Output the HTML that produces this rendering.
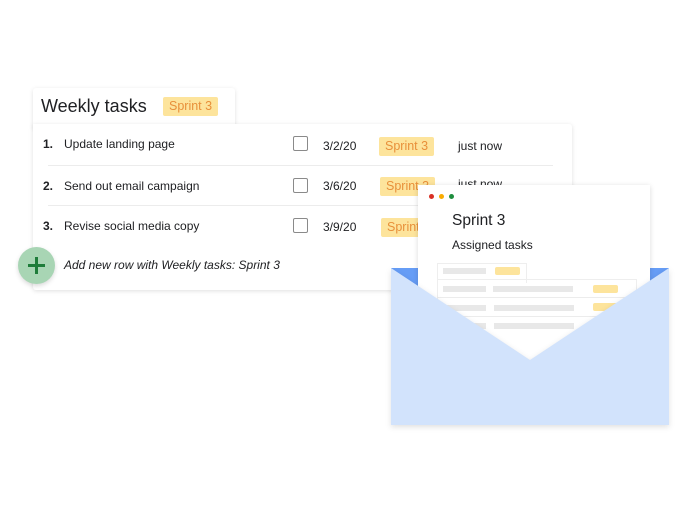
<!DOCTYPE html>
<html><head><style>
*{margin:0;padding:0;box-sizing:border-box}
body{width:700px;height:518px;background:#fff;position:relative;overflow:hidden;font-family:"Liberation Sans",Arial,sans-serif;color:#202124}
.abs{position:absolute}
.tab{left:33px;top:88px;width:202px;height:40px;background:#fff;box-shadow:0 1px 4px rgba(0,0,0,.12);border-radius:3px 3px 0 0}
.card{left:33px;top:124px;width:539px;height:166px;background:#fff;box-shadow:0 1px 5px rgba(0,0,0,.13);border-radius:0 3px 3px 3px}
.chip{background:#fde49c;color:#e8903a;font-size:12.5px;border-radius:2px;padding:2px 6px;line-height:15px}
.t{font-size:12px;color:#202124}
.cb{width:15px;height:15px;border:1.5px solid #8a8a8a;border-radius:2px}
.line{height:1px;background:#ececec}
.g{background:#e8e8e8;height:6px}
.y{background:#fde49c;height:8px;border-radius:2px}
</style></head><body>
<div class="abs tab"></div>
<div class="abs card"></div>
<div class="abs" style="left:41px;top:96px;font-size:18px;color:#202124">Weekly tasks</div>
<div class="abs chip" style="left:163px;top:97px;">Sprint 3</div>

<div class="abs t" style="left:43px;top:137px;font-weight:bold">1.</div>
<div class="abs t" style="left:64px;top:137px">Update landing page</div>
<div class="abs cb" style="left:293px;top:136px"></div>
<div class="abs t" style="left:323px;top:139px">3/2/20</div>
<div class="abs chip" style="left:379px;top:137px">Sprint 3</div>
<div class="abs t" style="left:458px;top:139px">just now</div>
<div class="abs line" style="left:48px;top:165px;width:505px"></div>

<div class="abs t" style="left:43px;top:179px;font-weight:bold">2.</div>
<div class="abs t" style="left:64px;top:179px">Send out email campaign</div>
<div class="abs cb" style="left:293px;top:178px"></div>
<div class="abs t" style="left:323px;top:179px">3/6/20</div>
<div class="abs chip" style="left:380px;top:177px">Sprint 3</div>
<div class="abs t" style="left:458px;top:177px">just now</div>
<div class="abs line" style="left:48px;top:205px;width:505px"></div>

<div class="abs t" style="left:43px;top:219px;font-weight:bold">3.</div>
<div class="abs t" style="left:64px;top:219px">Revise social media copy</div>
<div class="abs cb" style="left:293px;top:218px"></div>
<div class="abs t" style="left:323px;top:220px">3/9/20</div>
<div class="abs chip" style="left:381px;top:218px">Sprint 3</div>

<div class="abs" style="left:18px;top:247px;width:37px;height:37px;border-radius:50%;background:#a8d5b4;box-shadow:0 2px 5px rgba(0,0,0,.15)"></div>
<div class="abs" style="left:28px;top:264px;width:17px;height:3px;background:#1e7d3a"></div>
<div class="abs" style="left:35px;top:257px;width:3px;height:17px;background:#1e7d3a"></div>
<div class="abs t" style="left:64px;top:258px;font-style:italic">Add new row with Weekly tasks: Sprint 3</div>

<div class="abs" style="left:391px;top:268px;width:278px;height:100px;background:#669df6"></div>
<div class="abs" style="left:418px;top:185px;width:232px;height:200px;background:#fff;box-shadow:0 1px 5px rgba(0,0,0,.15)"></div>
<div class="abs" style="left:429px;top:194px;width:5px;height:5px;border-radius:50%;background:#d93025"></div>
<div class="abs" style="left:439px;top:194px;width:5px;height:5px;border-radius:50%;background:#f9ab00"></div>
<div class="abs" style="left:449px;top:194px;width:5px;height:5px;border-radius:50%;background:#1e8e3e"></div>
<div class="abs" style="left:452px;top:212px;font-size:15.5px">Sprint 3</div>
<div class="abs" style="left:452px;top:238px;font-size:12px">Assigned tasks</div>
<div class="abs" style="left:437px;top:263px;width:90px;height:20px;border:1px solid #eee;border-bottom:none"></div>
<div class="abs" style="left:437px;top:279px;width:200px;height:95px;border:1px solid #eee"></div>
<div class="abs g" style="left:443px;top:268px;width:43px"></div>
<div class="abs y" style="left:495px;top:267px;width:25px"></div>
<div class="abs g" style="left:443px;top:286px;width:43px"></div>
<div class="abs g" style="left:493px;top:286px;width:80px"></div>
<div class="abs y" style="left:593px;top:285px;width:25px"></div>
<div class="abs line" style="left:437px;top:297px;width:200px"></div>
<div class="abs g" style="left:443px;top:305px;width:43px"></div>
<div class="abs g" style="left:494px;top:305px;width:80px"></div>
<div class="abs y" style="left:593px;top:303px;width:25px"></div>
<div class="abs line" style="left:437px;top:316px;width:200px"></div>
<div class="abs g" style="left:443px;top:323px;width:43px"></div>
<div class="abs g" style="left:494px;top:323px;width:80px"></div>
<svg class="abs" style="left:389px;top:266px;filter:drop-shadow(0 2px 3px rgba(0,0,0,.12))" width="284" height="164">
<polygon points="2,2 141,94 280,2 280,159 2,159" fill="#d2e3fc"/>
</svg>
</body></html>
